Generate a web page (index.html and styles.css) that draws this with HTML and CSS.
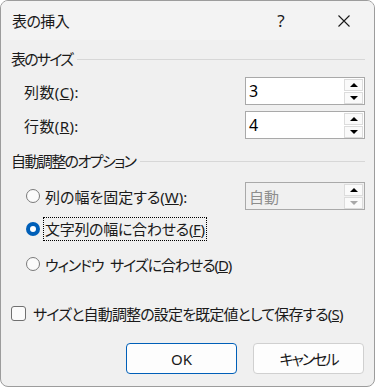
FILE: index.html
```html
<!DOCTYPE html>
<html lang="ja">
<head>
<meta charset="utf-8">
<link rel="stylesheet" href="styles.css">
</head>
<body>
<div class="window">
  <div class="titlebar">
    <span class="title">表の挿入</span>
    <span class="help">?</span>
    <span class="close">
      <svg width="12" height="12" viewBox="0 0 12 12"><path d="M0.5 0.5 L11.5 11.5 M11.5 0.5 L0.5 11.5" stroke="#1a1a1a" stroke-width="1.1" fill="none"/></svg>
    </span>
  </div>
  <div class="content">
    <div class="group-head g1"><span class="ht">表のサイズ</span><i class="rule"></i></div>
    <div class="row r1">
      <span class="label">列数(<u>C</u>):</span>
      <div class="spin"><span class="val">3</span>
        <div class="btns"><span class="sb"><i class="up"></i></span><span class="sb"><i class="down"></i></span></div>
      </div>
    </div>
    <div class="row r2">
      <span class="label">行数(<u>R</u>):</span>
      <div class="spin"><span class="val">4</span>
        <div class="btns"><span class="sb"><i class="up"></i></span><span class="sb"><i class="down"></i></span></div>
      </div>
    </div>
    <div class="group-head g2"><span class="ht">自動調整のオプション</span><i class="rule"></i></div>
    <div class="row opt1">
      <span class="radio"></span><span class="rtext">列の幅を固定する(<u>W</u>):</span>
      <div class="spin disabled"><span class="val">自動</span>
        <div class="btns"><span class="sb"><i class="up"></i></span><span class="sb"><i class="down"></i></span></div>
      </div>
    </div>
    <div class="row opt2">
      <span class="radio on"></span><span class="rtext focus">文字列の幅に合わせる(<u>F</u>)</span>
    </div>
    <div class="row opt3">
      <span class="radio"></span><span class="rtext">ウィンドウ サイズに合わせる(<u>D</u>)</span>
    </div>
    <div class="row chk">
      <span class="box"></span><span class="ctext">サイズと自動調整の設定を既定値として保存する(<u>S</u>)</span>
    </div>
    <div class="buttons">
      <span class="btn default">OK</span>
      <span class="btn cancel">キャンセル</span>
    </div>
  </div>
</div>
</body>
</html>
```
FILE: styles.css
```css
html, body {
  margin: 0;
  padding: 0;
  background: #ffffff;
}
body {
  font-family: "Noto Sans", "Noto Sans CJK JP", sans-serif;
  font-feature-settings: "palt";
  font-size: 15px;
  color: #1a1a1a;
}
.window {
  box-sizing: border-box;
  width: 375px;
  height: 387px;
  border: 1px solid #9c9c9c;
  border-radius: 8px;
  background: #f0f0f0;
  overflow: hidden;
}
.titlebar {
  height: 39px;
  display: flex;
  align-items: center;
  background: #f3f3f3;
}
.title {
  margin-left: 11px;
  flex: 1;
  font-size: 15px;
  letter-spacing: -0.6px;
}
.help {
  width: 20px;
  text-align: center;
  margin-right: 47px;
  font-family: "Noto Sans", sans-serif;
  font-size: 17px;
}
.close {
  width: 12px;
  height: 12px;
  margin-right: 24px;
  display: flex;
}
.content {
  padding: 0 9px 0 10px;
}
.group-head {
  height: 20px;
  display: flex;
  align-items: center;
}
.group-head .rule {
  flex: 1;
  height: 1px;
  background: #d7d7d7;
  margin-left: 5px;
  margin-top: 2px;
}
.g1 { margin-top: 8px; }
.g1 .ht { letter-spacing: -1.8px; }
.g2 { margin-top: 11px; }
.g2 .ht { letter-spacing: -1.6px; }
.row {
  display: flex;
  align-items: center;
}
.label {
  margin-left: 13px;
  flex: 1;
  letter-spacing: 0.4px;
}
.r1 { margin-top: 9px; height: 28px; }
.r2 { margin-top: 6px; height: 28px; }
.spin {
  box-sizing: border-box;
  width: 120px;
  height: 28px;
  border: 1px solid #a9a9a9;
  background: #ffffff;
  display: flex;
  align-items: center;
  justify-content: space-between;
}
.val {
  margin-left: 3px;
  font-size: 16px;
  color: #000;
}
.btns {
  display: flex;
  flex-direction: column;
  gap: 1px;
  margin-right: 1px;
}
.sb {
  box-sizing: border-box;
  width: 19px;
  height: 12px;
  border: 1px solid #dcdcdc;
  background: #fafafa;
  display: flex;
  align-items: center;
  justify-content: center;
}
.up {
  width: 0; height: 0;
  border-left: 4px solid transparent;
  border-right: 4px solid transparent;
  border-bottom: 4px solid #000;
}
.down {
  width: 0; height: 0;
  border-left: 4px solid transparent;
  border-right: 4px solid transparent;
  border-top: 4px solid #000;
}
.spin.disabled { background: #f0f0f0; }
.spin.disabled .val { color: #8d8d8d; font-size: 15px; }
.spin.disabled .sb:last-child .down { border-top-color: #a8a8a8; }
.opt1 { margin-top: 12px; height: 28px; }
.opt2 { margin-top: 7px; height: 24px; }
.opt3 { margin-top: 11px; height: 24px; }
.radio {
  box-sizing: border-box;
  width: 14px;
  height: 14px;
  border-radius: 50%;
  border: 1px solid #7a7a7a;
  background: #fbfbfb;
  margin-left: 15px;
  position: relative;
}
.radio.on {
  border: none;
  background: #005fb8;
}
.radio.on::after {
  content: "";
  position: absolute;
  left: 4px;
  top: 4px;
  width: 6px;
  height: 6px;
  border-radius: 50%;
  background: #fff;
}
.rtext {
  margin-left: 5px;
  flex: 1;
}
.opt2 .rtext, .opt3 .rtext { flex: none; }
.opt2 .rtext { letter-spacing: -0.3px; }
.opt3 .rtext { letter-spacing: -1.1px; word-spacing: 4px; }
.focus {
  box-sizing: border-box;
  outline: 1px dotted #000;
  outline-offset: 0;
  padding: 0 1px;
  margin-left: 4px;
  line-height: 22px;
}
.chk { margin-top: 25px; height: 24px; }
.box {
  box-sizing: border-box;
  width: 15px;
  height: 15px;
  border: 1px solid #707070;
  border-radius: 3px;
  background: #fbfbfb;
}
.ctext { margin-left: 7px; letter-spacing: -0.85px; }
.buttons {
  margin-top: 18px;
  display: flex;
  justify-content: flex-end;
  gap: 16px;
  padding-right: 1px;
}
.btn {
  box-sizing: border-box;
  width: 111px;
  height: 31px;
  border: 1px solid #d0d0d0;
  border-radius: 4px;
  background: #fdfdfd;
  display: flex;
  align-items: center;
  justify-content: center;
  font-size: 15px;
}
.btn.default {
  border-color: #005fb8;
}
.btn.cancel { letter-spacing: -2px; }
```
